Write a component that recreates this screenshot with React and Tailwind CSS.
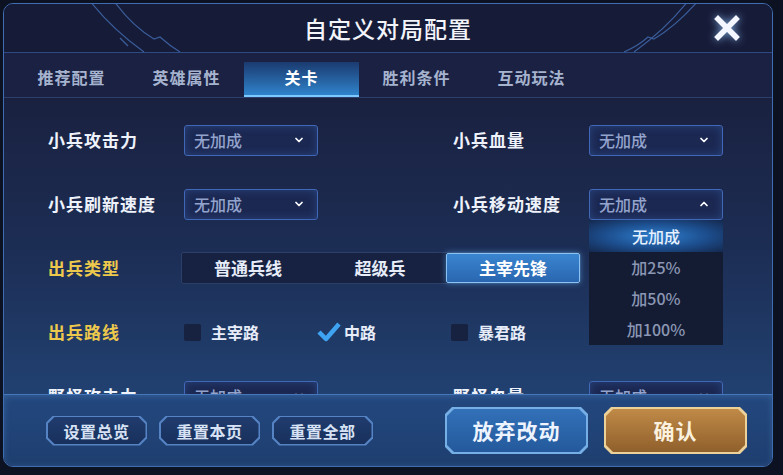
import { ChevronDown, ChevronUp } from 'lucide-react'

const cut =
  '[clip-path:polygon(7px_0,calc(100%_-_7px)_0,100%_7px,100%_calc(100%_-_7px),calc(100%_-_7px)_100%,7px_100%,0_calc(100%_-_7px),0_7px)]'

const tabs = ['推荐配置', '英雄属性', '关卡', '胜利条件', '互动玩法']

function Select({ open }) {
  return (
    <div className="relative shrink-0 w-[134px] h-[31px] rounded-[3px] border border-[#4168b6] bg-[#1b2852] flex items-center justify-between pl-[9px] pr-[12px] shadow-[inset_0_0_8px_rgba(70,120,210,0.35)]">
      <span className="text-[16px] font-medium text-[#93a3cc]">无加成</span>
      {open ? (
        <ChevronUp size={12} strokeWidth={3.5} className="text-white" />
      ) : (
        <ChevronDown size={12} strokeWidth={3.5} className="text-white" />
      )}
      {open && (
        <div className="absolute left-[-1px] top-[30px] w-[134px] bg-[#141c33] z-10 flex flex-col text-[16px] font-medium">
          <div className="h-[32px] flex items-center justify-center text-[#e6f0ff] bg-[radial-gradient(ellipse_at_center,#2f7fcf_0%,#1c4d8c_55%,#14284d_100%)]">
            无加成
          </div>
          <div className="h-[31px] flex items-center justify-center text-[#8b97b4]">加25%</div>
          <div className="h-[31px] flex items-center justify-center text-[#8b97b4]">加50%</div>
          <div className="h-[31px] flex items-center justify-center text-[#8b97b4]">加100%</div>
        </div>
      )}
    </div>
  )
}

function Field({ label, open }) {
  return (
    <div className="w-[405px] shrink-0 flex items-center">
      <div className="w-[136px] shrink-0 text-[17px] font-bold tracking-[1px] text-[#eef2fb]">{label}</div>
      <Select open={open} />
    </div>
  )
}

function SmallButton({ children }) {
  return (
    <div className={`w-[101px] h-[30px] p-[1.5px] bg-[#5583c4] ${cut}`}>
      <div className={`w-full h-full flex items-center justify-center bg-gradient-to-b from-[#203c6e] to-[#18305c] text-[16px] font-bold tracking-[0.5px] text-[#d7e2f5] ${cut}`}>
        {children}
      </div>
    </div>
  )
}

export default function App() {
  return (
    <div className="w-[783px] h-[475px] overflow-hidden bg-[#0c1221] font-['Noto_Sans_CJK_SC','Noto_Sans',sans-serif] relative">
      {/* panel */}
      <div className="ml-[3px] mt-[3px] w-[770px] h-[464px] rounded-[10px] border border-[#3f6db1] overflow-hidden flex flex-col bg-[#1a2140]">
        {/* header */}
        <div className="relative h-[49px] shrink-0 bg-[#161b38] border-b border-[#2d4a82] flex items-center justify-center">
          <svg className="absolute inset-0" width="770" height="49" viewBox="0 0 770 49" fill="none">
            <path d="M86 -3 Q108 25 140 48" stroke="#3a5d9a" strokeWidth="1.2" />
            <path d="M110 -3 Q128 22 150 35 L156 33 Q166 42 176 48" stroke="#3a5d9a" strokeWidth="1.2" />
            <path d="M116 34 L124 42" stroke="#3a5d9a" strokeWidth="1.2" />
            <path d="M684 -3 Q662 25 630 48" stroke="#3a5d9a" strokeWidth="1.2" />
            <path d="M694 -3 Q672 22 650 35 L644 33 Q634 42 620 48" stroke="#3a5d9a" strokeWidth="1.2" />
          </svg>
          <span className="relative text-[23px] font-medium tracking-[1px] text-[#f2f4fa]">自定义对局配置</span>
          <svg className="absolute left-[710px] top-[11px] drop-shadow-[0_0_4px_rgba(150,200,255,0.8)]" width="26" height="26" viewBox="0 0 26 26">
            <path d="M4 4 L22 22 M22 4 L4 22" stroke="#f4f7ff" strokeWidth="5.5" strokeLinecap="square" />
          </svg>
        </div>

        {/* tabs */}
        <div className="h-[45px] shrink-0 flex items-end pl-[10px] bg-[#1a2142] border-b border-[#2b3f6a]">
          {tabs.map((t) =>
            t === '关卡' ? (
              <div
                key={t}
                className="w-[115px] h-[35px] pb-[3px] flex items-center justify-center text-[16px] font-bold tracking-[1px] text-white bg-gradient-to-b from-[#1b3b70] to-[#2f84cc] border-b-2 border-[#7cc8ff]"
              >
                {t}
              </div>
            ) : (
              <div
                key={t}
                className="w-[115px] h-[35px] pb-[5px] flex items-center justify-center text-[16px] font-bold tracking-[1px] text-[#a6b3cf]"
              >
                {t}
              </div>
            )
          )}
        </div>

        {/* content */}
        <div className="h-[296px] shrink-0 overflow-hidden pt-[10px] pl-[44px] bg-gradient-to-b from-[#1a2140] via-[#1c2d54] to-[#214171]">
          <div className="h-16 flex items-center">
            <Field label="小兵攻击力" />
            <Field label="小兵血量" />
          </div>
          <div className="h-16 flex items-center">
            <Field label="小兵刷新速度" />
            <Field label="小兵移动速度" open />
          </div>
          <div className="h-16 flex items-center">
            <div className="w-[133px] shrink-0 text-[17px] font-bold tracking-[1px] text-[#ecc84c]">出兵类型</div>
            <div className="w-[400px] shrink-0 h-[32px] flex border border-[#2c3f66] bg-[#172242] rounded-[2px] text-[17px] font-bold">
              <div className="flex-1 flex items-center justify-center text-[#e6ecf8]">普通兵线</div>
              <div className="flex-1 flex items-center justify-center text-[#e6ecf8]">超级兵</div>
              <div className="flex-1 flex items-center justify-center text-white bg-gradient-to-b from-[#3a85d0] to-[#2a66b0] border border-[#8cc2f2] rounded-[2px] shadow-[0_0_6px_rgba(90,170,240,0.6)]">
                主宰先锋
              </div>
            </div>
          </div>
          <div className="h-16 flex items-center">
            <div className="w-[136px] shrink-0 text-[17px] font-bold tracking-[1px] text-[#ecc84c]">出兵路线</div>
            <div className="w-[133px] shrink-0 flex items-center">
              <div className="w-[17px] h-[17px] rounded-[2px] bg-[#172140]" />
              <span className="ml-[10px] text-[16px] font-bold text-[#e6ecf8]">主宰路</span>
            </div>
            <div className="w-[134px] shrink-0 flex items-center">
              <svg width="24" height="20" viewBox="0 0 24 20">
                <path d="M2 10 L9 17 L22 2" stroke="#3ea4f2" strokeWidth="4.5" fill="none" strokeLinejoin="round" />
              </svg>
              <span className="ml-[3px] text-[16px] font-bold text-[#e6ecf8]">中路</span>
            </div>
            <div className="flex items-center">
              <div className="w-[17px] h-[17px] rounded-[2px] bg-[#172140]" />
              <span className="ml-[10px] text-[16px] font-bold text-[#e6ecf8]">暴君路</span>
            </div>
          </div>
          <div className="h-16 flex items-center">
            <Field label="野怪攻击力" />
            <Field label="野怪血量" />
          </div>
        </div>

        {/* footer */}
        <div className="flex-1 flex items-center pl-[42px] pr-[25px] border-t border-[#4677bb] bg-gradient-to-b from-[#23487f] to-[#1e3e6f] shadow-[inset_0_1px_6px_rgba(110,170,240,0.25)]">
          <div className="flex gap-[12px]">
            <SmallButton>设置总览</SmallButton>
            <SmallButton>重置本页</SmallButton>
            <SmallButton>重置全部</SmallButton>
          </div>
          <div className="ml-auto flex gap-[16px]">
            <div className={`w-[143px] h-[47px] p-[2px] bg-[#76aee6] ${cut}`}>
              <div className={`w-full h-full flex items-center justify-center bg-gradient-to-b from-[#3270b8] to-[#245a9c] text-[21px] font-bold tracking-[1px] text-[#eef4ff] ${cut}`}>
                放弃改动
              </div>
            </div>
            <div className={`w-[143px] h-[47px] p-[2px] bg-[#ecd299] ${cut}`}>
              <div className={`w-full h-full flex items-center justify-center bg-gradient-to-b from-[#c08a47] to-[#90602c] text-[21px] font-bold tracking-[1px] text-[#fbf1de] ${cut}`}>
                确认
              </div>
            </div>
          </div>
        </div>
      </div>
    </div>
  )
}
